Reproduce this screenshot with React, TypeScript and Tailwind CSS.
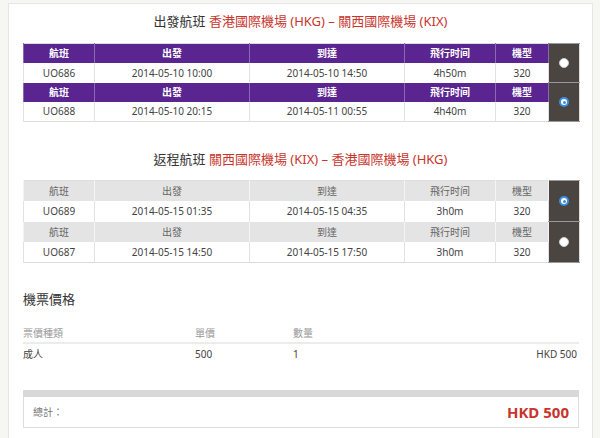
const outbound = [
  { no: "UO686", dep: "2014-05-10 10:00", arr: "2014-05-10 14:50", dur: "4h50m", type: "320", on: false },
  { no: "UO688", dep: "2014-05-10 20:15", arr: "2014-05-11 00:55", dur: "4h40m", type: "320", on: true },
];

const inbound = [
  { no: "UO689", dep: "2014-05-15 01:35", arr: "2014-05-15 04:35", dur: "3h0m", type: "320", on: true },
  { no: "UO687", dep: "2014-05-15 14:50", arr: "2014-05-15 17:50", dur: "3h0m", type: "320", on: false },
];

function Radio({ on }: { on: boolean }) {
  if (on) {
    return (
      <span className="mx-auto flex h-[10px] w-[10px] items-center justify-center rounded-full bg-[#3b8fdc]">
        <span className="flex h-[6px] w-[6px] items-center justify-center rounded-full bg-white">
          <span className="h-[3px] w-[3px] rounded-full bg-[#3b8fdc]" />
        </span>
      </span>
    );
  }
  return <span className="mx-auto block h-[10px] w-[10px] rounded-full border border-[#ccc] bg-white" />;
}

type Flight = (typeof outbound)[number];

function FlightTable({ rows, purple }: { rows: Flight[]; purple: boolean }) {
  const head = purple
    ? "bg-[#5a2590] text-white font-semibold border-[#8a6aae]"
    : "bg-[#e4e4e4] text-[#666] border-[#f4f4f4]";
  return (
    <table className="w-[556px] table-fixed border-collapse border border-[#ddd] text-[10px] leading-[12px] text-[#444]">
      <colgroup>
        <col className="w-[71px]" />
        <col className="w-[155px]" />
        <col className="w-[155px]" />
        <col className="w-[91px]" />
        <col className="w-[53px]" />
        <col className="w-[31px]" />
      </colgroup>
      <tbody>
        {rows.map((r) => [
          <tr key={r.no + "h"} className={purple ? "h-[19px]" : "h-[20px]"}>
            {["航班", "出發", "到達", "飛行时间", "機型"].map((h) => (
              <td key={h} className={`border-x p-0 text-center ${head}`}>
                {h}
              </td>
            ))}
            <td rowSpan={2} className="border-y border-[#999] bg-[#4a4541] p-0 align-middle">
              <Radio on={r.on} />
            </td>
          </tr>,
          <tr key={r.no} className={`bg-white ${purple ? "h-[20px]" : "h-[21px]"}`}>
            <td className="border-x border-[#e2e2e2] p-0 text-center">{r.no}</td>
            <td className="border-x border-[#e2e2e2] p-0 text-center">{r.dep}</td>
            <td className="border-x border-[#e2e2e2] p-0 text-center">{r.arr}</td>
            <td className="border-x border-[#e2e2e2] p-0 text-center">{r.dur}</td>
            <td className="border-x border-[#e2e2e2] p-0 text-center">{r.type}</td>
          </tr>,
        ])}
      </tbody>
    </table>
  );
}

function Title({ label, route }: { label: string; route: string }) {
  return (
    <div className="text-center text-[13px] leading-[18px] text-[#333]">
      {label} <span className="text-[#c8352d]">{route}</span>
    </div>
  );
}

export default function App() {
  return (
    <div
      className="h-[438px] overflow-hidden bg-[#f6f6f3] pl-[8px] pr-[7px] pt-[3px]"
      style={{ fontFamily: '"Noto Sans", "Noto Sans CJK TC", sans-serif' }}
    >
      <div className="h-[460px] border border-[#e6e6e6] bg-white px-[14px] pt-[8px]">
        <Title label="出發航班" route="香港國際機場 (HKG) – 關西國際機場 (KIX)" />
        <div className="mt-[13px]">
          <FlightTable rows={outbound} purple />
        </div>

        <div className="mt-[28px]">
          <Title label="返程航班" route="關西國際機場 (KIX) – 香港國際機場 (HKG)" />
        </div>
        <div className="mt-[12px]">
          <FlightTable rows={inbound} purple={false} />
        </div>

        <div className="mt-[27px] text-[13px] leading-[18px] text-[#333]">機票價格</div>

        <div className="mt-[16px] w-[556px] text-[10px]">
          <div className="flex h-[20px] items-center border-b-2 border-[#ececec] text-[#999]">
            <span className="w-[172px]">票價種類</span>
            <span className="w-[98px]">單價</span>
            <span>數量</span>
          </div>
          <div className="flex h-[21px] items-center text-[#444]">
            <span className="w-[172px]">成人</span>
            <span className="w-[98px]">500</span>
            <span className="flex-1">1</span>
            <span className="pr-[2px]">HKD 500</span>
          </div>
        </div>

        <div className="mt-[25px] w-[556px]">
          <div className="h-[7px] bg-[#d8d8d8]" />
          <div className="flex h-[31px] items-center justify-between border border-t-0 border-[#ddd] px-[9px]">
            <span className="text-[10px] text-[#777]">總計：</span>
            <span className="text-[15px] font-bold text-[#c8352d]">HKD 500</span>
          </div>
        </div>
      </div>
    </div>
  );
}
